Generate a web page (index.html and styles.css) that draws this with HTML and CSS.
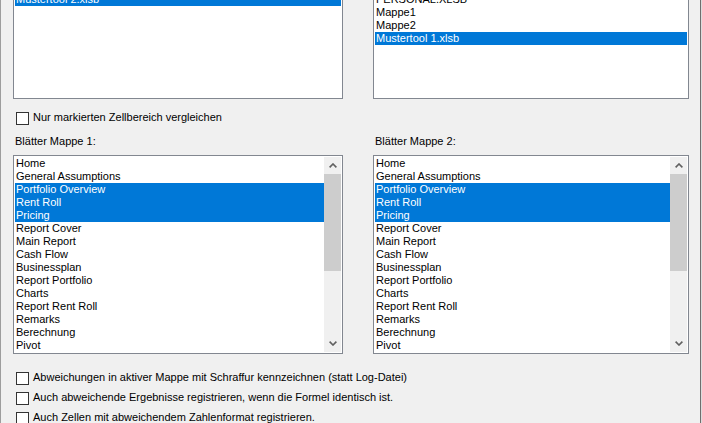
FILE: index.html
```html
<!DOCTYPE html>
<html lang="de">
<head>
<meta charset="utf-8">
<title>Mappen vergleichen</title>
<link rel="stylesheet" href="styles.css">
</head>
<body>
<div class="dlg">
  <div class="pair top">
    <div class="listbox top-lb">
      <div class="row sel">Mustertool 2.xlsb</div>
    </div>
    <div class="listbox top-lb">
      <div class="row">PERSONAL.XLSB</div>
      <div class="row">Mappe1</div>
      <div class="row">Mappe2</div>
      <div class="row sel">Mustertool 1.xlsb</div>
    </div>
  </div>

  <label class="chk first"><span class="box"></span><span class="txt">Nur markierten Zellbereich vergleichen</span></label>

  <div class="pair sheets">
    <div class="col">
      <div class="lbl">Blätter Mappe 1:</div>
      <div class="listbox sheet-lb">
        <div class="items">
          <div class="row">Home</div>
          <div class="row">General Assumptions</div>
          <div class="row sel">Portfolio Overview</div>
          <div class="row sel">Rent Roll</div>
          <div class="row sel">Pricing</div>
          <div class="row">Report Cover</div>
          <div class="row">Main Report</div>
          <div class="row">Cash Flow</div>
          <div class="row">Businessplan</div>
          <div class="row">Report Portfolio</div>
          <div class="row">Charts</div>
          <div class="row">Report Rent Roll</div>
          <div class="row">Remarks</div>
          <div class="row">Berechnung</div>
          <div class="row">Pivot</div>
        </div>
        <div class="sb">
          <div class="sb-btn"><svg width="8" height="5" viewBox="0 0 8 5"><path d="M0.6 4.4 L4 1 L7.4 4.4" fill="none" stroke="#606060" stroke-width="1.6"/></svg></div>
          <div class="sb-track"><div class="sb-thumb"></div></div>
          <div class="sb-btn"><svg width="8" height="5" viewBox="0 0 8 5"><path d="M0.6 0.6 L4 4 L7.4 0.6" fill="none" stroke="#606060" stroke-width="1.6"/></svg></div>
        </div>
      </div>
    </div>
    <div class="col">
      <div class="lbl">Blätter Mappe 2:</div>
      <div class="listbox sheet-lb">
        <div class="items">
          <div class="row">Home</div>
          <div class="row">General Assumptions</div>
          <div class="row sel">Portfolio Overview</div>
          <div class="row sel">Rent Roll</div>
          <div class="row sel">Pricing</div>
          <div class="row">Report Cover</div>
          <div class="row">Main Report</div>
          <div class="row">Cash Flow</div>
          <div class="row">Businessplan</div>
          <div class="row">Report Portfolio</div>
          <div class="row">Charts</div>
          <div class="row">Report Rent Roll</div>
          <div class="row">Remarks</div>
          <div class="row">Berechnung</div>
          <div class="row">Pivot</div>
        </div>
        <div class="sb">
          <div class="sb-btn"><svg width="8" height="5" viewBox="0 0 8 5"><path d="M0.6 4.4 L4 1 L7.4 4.4" fill="none" stroke="#606060" stroke-width="1.6"/></svg></div>
          <div class="sb-track"><div class="sb-thumb"></div></div>
          <div class="sb-btn"><svg width="8" height="5" viewBox="0 0 8 5"><path d="M0.6 0.6 L4 4 L7.4 0.6" fill="none" stroke="#606060" stroke-width="1.6"/></svg></div>
        </div>
      </div>
    </div>
  </div>

  <div class="opts">
    <label class="chk"><span class="box"></span><span class="txt">Abweichungen in aktiver Mappe mit Schraffur kennzeichnen (statt Log-Datei)</span></label>
    <label class="chk"><span class="box"></span><span class="txt">Auch abweichende Ergebnisse registrieren, wenn die Formel identisch ist.</span></label>
    <label class="chk"><span class="box"></span><span class="txt">Auch Zellen mit abweichendem Zahlenformat registrieren.</span></label>
  </div>
</div>
</body>
</html>
```

FILE: styles.css
```css
html, body {
  margin: 0;
  padding: 0;
  background: #f0f0f0;
  overflow: hidden;
}

body {
  width: 702px;
  height: 423px;
  font-family: "Liberation Sans", Arial, sans-serif;
  font-size: 11px;
  line-height: 13px;
  color: #000;
}

.dlg {
  width: 702px;
  height: 432px;
  box-sizing: border-box;
  padding-left: 13px;
  box-shadow: inset 1px 0 0 #9d9d9d, inset -1px 0 0 #dcdcdc, inset -2px 0 0 #6f6f6f;
}

.pair {
  display: grid;
  grid-template-columns: 330px 316px;
  column-gap: 30px;
}

.top {
  margin-top: -9px;
}

.listbox {
  box-sizing: border-box;
  border: 1px solid #828790;
  background: #fff;
  padding: 1px;
}

.top-lb {
  height: 108px;
}

.row {
  height: 13px;
  padding-left: 1px;
  white-space: nowrap;
  overflow: hidden;
}

.row.sel {
  background: #0078d7;
  color: #fff;
}

.chk {
  display: flex;
  align-items: flex-start;
  height: 14px;
  margin-left: 3px;
}

.chk .box {
  width: 13px;
  height: 13px;
  box-sizing: border-box;
  margin-top: 1px;
  margin-right: 4px;
  border: 1px solid #333;
  background: #fff;
  flex: none;
}

.chk .txt {
  white-space: nowrap;
}

.first {
  margin-top: 12px;
}

.sheets {
  margin-top: 10px;
}

.lbl {
  height: 13px;
  margin-left: 2px;
  margin-bottom: 7px;
}

.sheet-lb {
  height: 199px;
  display: flex;
}

.items {
  flex: 1;
  min-width: 0;
}

.sb {
  width: 17px;
  flex: none;
  display: flex;
  flex-direction: column;
  background: #f0f0f0;
}

.sb-btn {
  height: 17px;
  display: flex;
  align-items: center;
  justify-content: center;
  flex: none;
}

.sb-btn svg {
  display: block;
}

.sb-track {
  flex: 1;
}

.sb-thumb {
  height: 97px;
  background: #cdcdcd;
}

.opts {
  margin-top: 17px;
  display: flex;
  flex-direction: column;
  row-gap: 6px;
}
```
